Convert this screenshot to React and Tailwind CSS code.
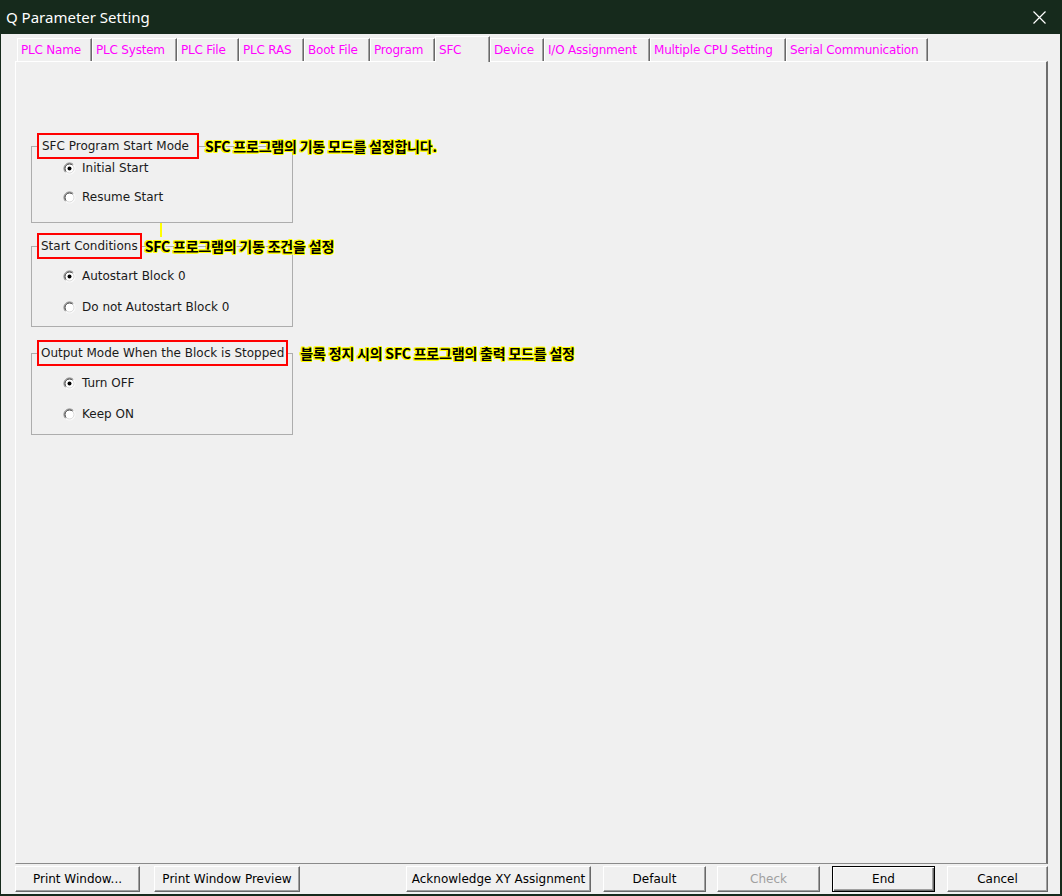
import React from "react";

const Tabs = [
  { name: "PLC Name", w: "w-[75px]" },
  { name: "PLC System", w: "w-[85px]" },
  { name: "PLC File", w: "w-[62px]" },
  { name: "PLC RAS", w: "w-[65px]" },
  { name: "Boot File", w: "w-[66px]" },
  { name: "Program", w: "w-[65px]" },
  { name: "SFC", w: "w-[55px]", current: true },
  { name: "Device", w: "w-[54px]" },
  { name: "I/O Assignment", w: "w-[106px]" },
  { name: "Multiple CPU Setting", w: "w-[136px]" },
  { name: "Serial Communication", w: "w-[142px]" },
];

const note =
  "absolute top-1/2 -translate-y-1/2 left-full whitespace-nowrap font-['Noto_Sans_CJK_KR','Noto_Sans',sans-serif] font-bold text-[14px] text-black tracking-[-0.2px] [text-shadow:1px_0_0_#ffff00,-1px_0_0_#ffff00,0_1px_0_#ffff00,0_-1px_0_#ffff00,1px_1px_0_#ffff00,-1px_-1px_0_#ffff00,1px_-1px_0_#ffff00,-1px_1px_0_#ffff00]";

function Radio({ checked }) {
  return (
    <svg width="13" height="13" viewBox="0 0 13 13" className="shrink-0">
      <circle cx="6.5" cy="6.5" r="5.5" fill="#fff" />
      <path d="M2.6 10.4 A5.5 5.5 0 0 1 10.4 2.6" stroke="#7a7a7a" fill="none" />
      <path d="M3.3 9.7 A4.5 4.5 0 0 1 9.7 3.3" stroke="#3a3a3a" fill="none" />
      <path d="M10.4 2.6 A5.5 5.5 0 0 1 2.6 10.4" stroke="#fff" fill="none" />
      <path d="M9.7 3.3 A4.5 4.5 0 0 1 3.3 9.7" stroke="#d8d8d8" fill="none" />
      {checked && <circle cx="6.5" cy="6.5" r="2" fill="#000" />}
    </svg>
  );
}

function Option({ label, checked, className = "" }) {
  return (
    <div className={`flex items-center h-[18px] pl-[26px] gap-[6px] ${className}`}>
      <Radio checked={checked} />
      <span>{label}</span>
    </div>
  );
}

function Button({ label, w, className = "", disabled, isDefault }) {
  return (
    <button
      className={`h-[26px] ${w} ${className} bg-[#f0f0f0] text-[12px] ${
        disabled ? "text-[#a0a0a0]" : "text-black"
      } ${
        isDefault
          ? "border border-black shadow-[inset_1px_1px_0_#fff,inset_-1px_-1px_0_#696969,inset_-2px_-2px_0_#a0a0a0]"
          : "border border-t-white border-l-white border-r-[#696969] border-b-[#696969] shadow-[inset_-1px_-1px_0_#a0a0a0]"
      }`}
    >
      {label}
    </button>
  );
}

export default function App() {
  return (
    <div className="w-[1062px] h-[896px] flex flex-col bg-[#f0f0f0] font-['DejaVu_Sans',sans-serif] text-[12px] text-[#1a1a1a] overflow-hidden">
      {/* title bar */}
      <div className="h-[34px] shrink-0 bg-[#162a1c] flex items-center justify-between pl-[6px] pr-[16px]">
        <span className="text-white text-[15px] font-['Noto_Sans',sans-serif]">Q Parameter Setting</span>
        <svg width="13" height="13" viewBox="0 0 13 13">
          <path d="M0.5 0.5 L12.5 12.5 M12.5 0.5 L0.5 12.5" stroke="#fff" strokeWidth="1.2" />
        </svg>
      </div>

      <div className="flex-1 flex flex-col border-l border-r-2 border-b-2 border-[#162a1c]">
        {/* tabs */}
        <div className="flex items-end h-[27px] pl-[16px] pt-[2px] relative z-10">
          {Tabs.map((tab) => (
            <div
              key={tab.name}
              className={`${tab.w} ${
                tab.current ? "h-[26px] -mb-px bg-[#f0f0f0]" : "h-[23px]"
              } flex items-center pl-[3px] whitespace-nowrap overflow-hidden tracking-[-0.2px] text-[#ff00ff] border-t border-l border-t-white border-l-white border-r border-r-[#696969] shadow-[inset_-1px_0_0_#a0a0a0]`}
            >
              {tab.name}
            </div>
          ))}
        </div>

        {/* pane */}
        <div className="ml-[14px] mr-[12px] h-[803px] border-t border-l border-t-white border-l-white border-r-2 border-b border-r-[#6e6e6e] border-b-[#8a8a8a] pl-[15px] pt-[71px]">
          <fieldset className="w-[262px] min-w-0 border border-[#adadad] px-[5px] pb-[16px]">
            <legend className="relative h-[26px] border-2 border-[#ff0000] pl-[3px] pr-[8px] flex items-center whitespace-nowrap">
              SFC Program Start Mode
              <span className={`${note} ml-[8px]`}>SFC 프로그램의 기동 모드를 설정합니다.</span>
            </legend>
            <Option label="Initial Start" checked />
            <Option label="Resume Start" className="mt-[11px]" />
          </fieldset>

          <fieldset className="w-[262px] min-w-0 mt-[10px] border border-[#adadad] px-[5px] pb-[10px]">
            <legend className="relative h-[26px] border-2 border-[#ff0000] px-[2px] flex items-center whitespace-nowrap">
              Start Conditions
              <span className="absolute left-[121px] -top-[12px] w-[2px] h-[14px] bg-[#ffff00]" />
              <span className={`${note} ml-[5px]`}>SFC 프로그램의 기동 조건을 설정</span>
            </legend>
            <Option label="Autostart Block 0" checked className="mt-[8px]" />
            <Option label="Do not Autostart Block 0" className="mt-[13px]" />
          </fieldset>

          <fieldset className="w-[262px] min-w-0 mt-[13px] border border-[#adadad] px-[5px] pb-[11px]">
            <legend className="relative h-[26px] border-2 border-[#ff0000] px-[2px] flex items-center whitespace-nowrap">
              Output Mode When the Block is Stopped
              <span className={`${note} ml-[14px]`}>블록 정지 시의 SFC 프로그램의 출력 모드를 설정</span>
            </legend>
            <Option label="Turn OFF" checked className="mt-[8px]" />
            <Option label="Keep ON" className="mt-[13px]" />
          </fieldset>
        </div>

        {/* buttons */}
        <div className="flex mt-[2px] pl-[14px]">
          <Button label="Print Window..." w="w-[125px]" />
          <Button label="Print Window Preview" w="w-[146px]" className="ml-[14px]" />
          <Button label="Acknowledge XY Assignment" w="w-[185px]" className="ml-[106px]" />
          <Button label="Default" w="w-[103px]" className="ml-[12px]" />
          <Button label="Check" w="w-[103px]" className="ml-[11px]" disabled />
          <Button label="End" w="w-[103px]" className="ml-[12px]" isDefault />
          <Button label="Cancel" w="w-[101px]" className="ml-[12px]" />
        </div>
      </div>
    </div>
  );
}
